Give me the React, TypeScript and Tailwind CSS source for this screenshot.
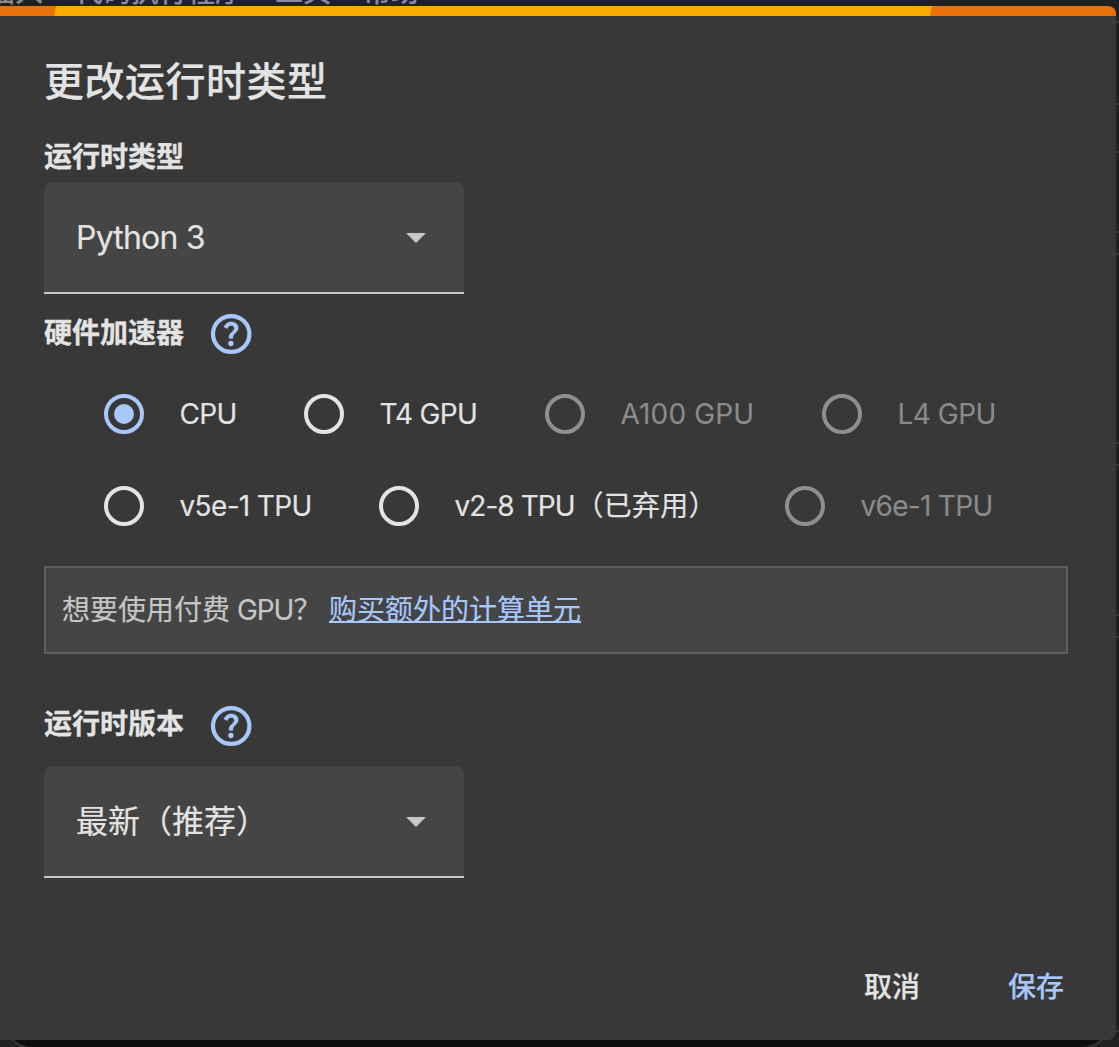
import React from "react";

const edgeLines = [
  "top-[21px]", "top-[103px]", "top-[151px]", "top-[231px]", "top-[253px]",
  "top-[442px]", "top-[464px]", "top-[614px]", "top-[636px]", "top-[1030px]",
];

function Help() {
  return (
    <svg className="ml-[23px] size-12 shrink-0" viewBox="0 0 24 24" fill="#a8c7fa" stroke="#a8c7fa" aria-label="帮助">
      <path strokeWidth="0.3" d="M11.95 18c.35 0 .65-.12.89-.36s.36-.54.36-.89-.12-.65-.36-.89-.54-.36-.89-.36-.65.12-.89.36-.36.54-.36.89.12.65.36.89.54.36.89.36Zm-.9-3.85h1.85c0-.55.06-.98.19-1.3s.48-.75 1.06-1.3c.43-.43.78-.85 1.03-1.24s.37-.87.37-1.41c0-.93-.34-1.65-1.02-2.15S13.04 6 12.1 6c-.95 0-1.72.25-2.31.75s-1.01 1.1-1.24 1.8l1.65.65c.08-.3.27-.63.56-.98s.74-.52 1.34-.52c.53 0 .93.15 1.2.44s.4.61.4.96c0 .33-.1.65-.3.94s-.45.57-.75.82c-.73.65-1.18 1.14-1.35 1.47s-.25.94-.25 1.82Z" />
      <ellipse cx="12.1" cy="12" rx="9.1" ry="8.95" fill="none" strokeWidth="2.1" />
    </svg>
  );
}

function Select({ children }: { children: React.ReactNode }) {
  return (
    <div className="flex h-28 w-[420px] items-center justify-between rounded-t-lg border-b-2 border-[#c7c7c7] bg-[#454545] pt-0.5 pr-[38px] pl-8 text-[32px]">
      <span className="[-webkit-text-stroke:0.15px]">{children}</span>
      <svg className="h-2.5 w-5" viewBox="0 0 20 10" fill="#c7c7c7"><path d="M0 0h20L10 10z" /></svg>
    </div>
  );
}

function Radio({ label, note, width, tracking, checked, disabled }: {
  label: string; note?: string; width: string; tracking: string; checked?: boolean; disabled?: boolean;
}) {
  return (
    <label className={`flex shrink-0 items-center gap-[35px] whitespace-nowrap ${width} ${disabled ? "text-[#8a8a8a]" : ""}`}>
      <span className={`flex size-10 shrink-0 items-center justify-center rounded-full border-4 ${checked ? "border-[#a8c7fa]" : disabled ? "border-[#8f8f8f]" : "border-[#e3e3e3]"}`}>
        {checked && <span className="size-5 rounded-full bg-[#a8c7fa]" />}
      </span>
      <span className="pb-px pl-[0.5px] text-[28px] leading-10 [-webkit-text-stroke:0.15px]">
        <span className={tracking}>{label}</span>
        {note && <span className="ml-px tracking-[0.2px]">{note}</span>}
      </span>
    </label>
  );
}

export default function App() {
  return (
    <div className="relative h-[1047px] w-[1119px] overflow-hidden bg-[#202020] font-['Inter','Noto_Sans_CJK_SC',sans-serif] text-[#e3e3e3]">
      <div className="absolute -top-[26px] -left-[13px] flex gap-8 text-[28px] leading-9 font-medium whitespace-nowrap text-[#8c8c8c]">
        <span>插入</span><span>代码执行程序</span><span>工具</span><span>帮助</span>
      </div>
      {edgeLines.map((top) => <div key={top} className={`absolute right-0 h-0.5 w-[3px] bg-[#383838] ${top}`} />)}
      <div className="absolute top-[990px] left-[3px] h-[59px] w-[1108px] rounded-[30px] border-2 border-[#383838] bg-[#0e0e0e]" />

      <main className="relative mt-1.5 h-[1034px] w-[1116px] overflow-hidden rounded-r-lg bg-[#383838]">
        <div className="flex h-2.5 bg-[#e8710a]">
          <div className="ml-[54px] w-[878px] bg-[#f9ab00] [clip-path:polygon(2px_0,100%_0,876px_100%,0_100%)]" />
        </div>
        <div className="flex flex-col pl-11">
          <h1 className="mt-9 h-[60px] text-[40px] leading-[60px] font-medium tracking-[0.5px] [-webkit-text-stroke:0.2px]">更改运行时类型</h1>
          <h2 className="mt-[25px] h-[39px] text-[28px] leading-10 font-bold [-webkit-text-stroke:0.3px]">运行时类型</h2>
          <div className="mt-[6px] tracking-[-0.8px]"><Select>Python 3</Select></div>
          <div className="mt-4 flex h-12 items-center">
            <h2 className="-mt-0.5 text-[28px] leading-10 font-bold [-webkit-text-stroke:0.3px]">硬件加速器</h2><Help />
          </div>
          <div className="mt-9 ml-[60px] flex h-10">
            <Radio label="CPU" width="w-[200px]" tracking="tracking-[-0.7px]" checked />
            <Radio label="T4 GPU" width="w-[241px]" tracking="tracking-[-0.7px]" />
            <Radio label="A100 GPU" width="w-[277px]" tracking="tracking-[0.15px]" disabled />
            <Radio label="L4 GPU" width="w-[180px]" tracking="tracking-[-0.5px]" disabled />
          </div>
          <div className="mt-[52px] ml-[60px] flex h-10">
            <Radio label="v5e-1 TPU" width="w-[275px]" tracking="tracking-[-0.65px]" />
            <Radio label="v2-8 TPU" note="（已弃用）" width="w-[406px]" tracking="tracking-[-0.95px]" />
            <Radio label="v6e-1 TPU" width="w-[220px]" tracking="tracking-[-0.7px]" disabled />
          </div>
          <div className="mt-10 flex h-[88px] w-[1024px] items-center border-2 border-[#5e5e5e] bg-[#454545] pl-4 text-[28px] leading-10 text-[#c4c7c5] [-webkit-text-stroke:0.15px]">
            <span className="w-[267px] whitespace-nowrap">想要使用付费 <span className="-ml-px tracking-[-1.1px]">GPU</span>？</span>
            <a href="#" className="text-[#a8c7fa] underline decoration-2 underline-offset-[1px] [text-decoration-skip-ink:none]">购买额外的计算单元</a>
          </div>
          <div className="mt-12 flex h-12 items-center">
            <h2 className="-mt-1 text-[28px] leading-10 font-bold [-webkit-text-stroke:0.3px]">运行时版本</h2><Help />
          </div>
          <div className="mt-4"><Select>最新（推荐）</Select></div>
          <div className="mt-[89px] mr-[52px] flex justify-end gap-[88px] text-[28px] leading-10 font-medium [-webkit-text-stroke:0.2px]">
            <button>取消</button><button className="text-[#a8c7fa]">保存</button>
          </div>
        </div>
      </main>
    </div>
  );
}
